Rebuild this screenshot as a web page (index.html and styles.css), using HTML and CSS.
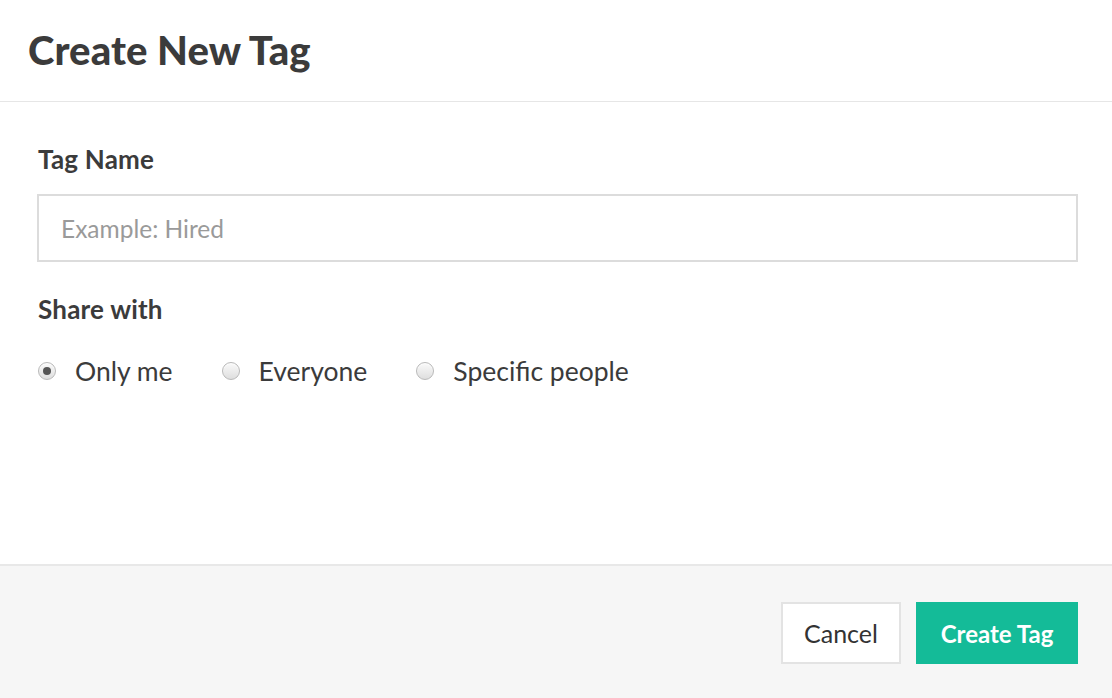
FILE: index.html
```html
<!DOCTYPE html>
<html>
<head>
<meta charset="utf-8">
<link rel="stylesheet" href="styles.css">
</head>
<body>
<div class="modal">
  <header class="modal-header">
    <h1 class="title">Create New Tag</h1>
  </header>
  <main class="modal-body">
    <label class="field-label" for="tagname">Tag Name</label>
    <input id="tagname" class="text-input" type="text" placeholder="Example: Hired">
    <div class="field-label share-label">Share with</div>
    <div class="radio-row">
      <label class="radio-option"><span class="radio checked"></span><span>Only me</span></label>
      <label class="radio-option"><span class="radio"></span><span>Everyone</span></label>
      <label class="radio-option"><span class="radio"></span><span>Specific people</span></label>
    </div>
  </main>
  <footer class="modal-footer">
    <button class="btn btn-cancel">Cancel</button>
    <button class="btn btn-primary">Create Tag</button>
  </footer>
</div>
</body>
</html>
```

FILE: styles.css
```css
* { box-sizing: border-box; }
html, body { margin: 0; padding: 0; background: #fff; }
body { font-family: Lato, "Open Sans", sans-serif; color: #3f3f3f; }

.modal {
  width: 1112px;
  height: 698px;
  display: flex;
  flex-direction: column;
}

.modal-header {
  height: 102px;
  border-bottom: 1px solid #e6e6e6;
  display: flex;
  align-items: center;
  padding: 0 0 2px 28px;
}
.title {
  margin: 0;
  font-size: 40px;
  font-weight: 900;
  color: #3b3b3b;
  letter-spacing: 0.1px;
}

.modal-body {
  flex: 1;
  padding: 41px 34px 0 37px;
  display: flex;
  flex-direction: column;
}
.field-label {
  display: block;
  font-size: 26px;
  font-weight: 700;
  color: #3b3b3b;
  line-height: 32px;
  margin-left: 1px;
  letter-spacing: 0.2px;
}
.text-input {
  margin-top: 19px;
  height: 68px;
  width: 100%;
  border: 2px solid #dcdcdc;
  border-radius: 0;
  padding: 0 22px;
  font-family: inherit;
  font-size: 24.5px;
  color: #333;
  outline: none;
}
.text-input::placeholder { color: #9a9a9a; }

.share-label { margin-top: 31px; }

.radio-row {
  display: flex;
  align-items: center;
  margin-top: 30px;
}
.radio-option {
  display: flex;
  align-items: center;
  font-size: 26.5px;
  color: #3b3b3b;
  margin-right: 48px;
}
.radio {
  width: 18px;
  height: 18px;
  border-radius: 50%;
  border: 1px solid #b9b9b9;
  background: linear-gradient(#fafafa, #dedede);
  margin: 0 19px 0 1px;
  display: flex;
  align-items: center;
  justify-content: center;
  box-shadow: inset 0 1px 1px rgba(255,255,255,0.8);
}
.radio.checked::after {
  content: "";
  width: 8px;
  height: 8px;
  border-radius: 50%;
  background: #555;
}

.modal-footer {
  height: 134px;
  border-top: 2px solid #e8e8e8;
  background: #f6f6f6;
  display: flex;
  justify-content: flex-end;
  align-items: flex-start;
  padding: 36px 34px 0 0;
  gap: 15px;
}
.btn {
  height: 62px;
  font-family: inherit;
  font-size: 25px;
  border-radius: 0;
  cursor: pointer;
}
.btn-cancel {
  width: 120px;
  background: #fff;
  border: 2px solid #e3e3e3;
  color: #333;
}
.btn-primary {
  width: 162px;
  background: #14bb98;
  border: none;
  color: #fff;
  font-weight: 700;
  font-size: 24px;
}
```
